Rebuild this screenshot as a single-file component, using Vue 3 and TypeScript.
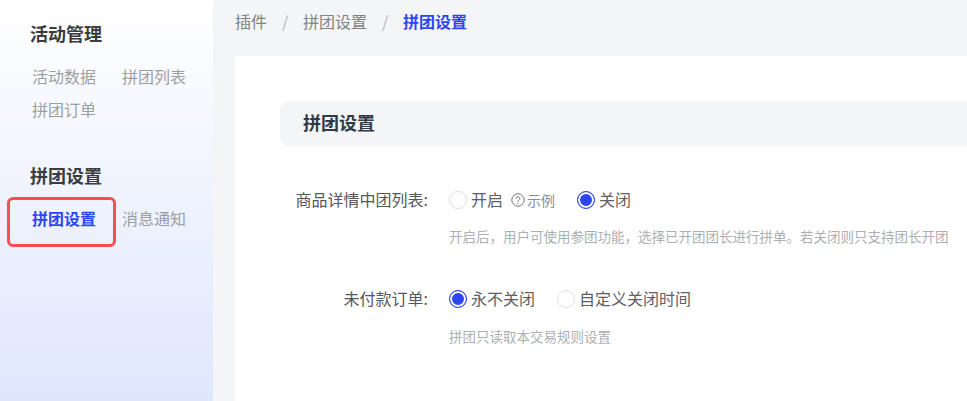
<script setup lang="ts">
interface NavGroup { title: string; items: { label: string; active?: boolean }[] }
const groups: NavGroup[] = [
  { title: '活动管理', items: [{ label: '活动数据' }, { label: '拼团列表' }, { label: '拼团订单' }] },
  { title: '拼团设置', items: [{ label: '拼团设置', active: true }, { label: '消息通知' }] }
]
</script>

<template>
  <div class="page">
    <aside class="side">
      <section v-for="g in groups" :key="g.title" class="group">
        <h3 class="group-title">{{ g.title }}</h3>
        <div class="group-items">
          <span v-for="i in g.items" :key="i.label" class="nav" :class="{ active: i.active }">{{ i.label }}</span>
        </div>
      </section>
      <div class="mark"></div>
    </aside>
    <main class="main">
      <nav class="crumbs">
        <span>插件</span><i>/</i><span>拼团设置</span><i>/</i><b>拼团设置</b>
      </nav>
      <div class="card">
        <div class="head">拼团设置</div>
        <div class="row first">
          <label class="label">商品详情中团列表:</label>
          <div class="field">
            <span class="radio"></span><span class="txt">开启</span>
            <svg class="help" width="14" height="14" viewBox="0 0 14 14" fill="none" stroke="#777" stroke-width="1">
              <circle cx="7" cy="7" r="6.2" />
              <path d="M5.1 5.5a1.9 1.9 0 1 1 2.9 1.6c-.7.4-1 .8-1 1.5" stroke-linecap="round" />
              <path d="M7 10v.9" />
            </svg>
            <span class="eg">示例</span>
            <span class="radio on gap1"></span><span class="txt">关闭</span>
          </div>
        </div>
        <p class="tip">开启后，用户可使用参团功能，选择已开团团长进行拼单。若关闭则只支持团长开团</p>
        <div class="row second">
          <label class="label">未付款订单:</label>
          <div class="field">
            <span class="radio on"></span><span class="txt">永不关闭</span>
            <span class="radio gap2"></span><span class="txt">自定义关闭时间</span>
          </div>
        </div>
        <p class="tip tip2">拼团只读取本交易规则设置</p>
      </div>
    </main>
  </div>
</template>

<style>
html, body { margin: 0; padding: 0; overflow: hidden; }
</style>

<style scoped>
.page {
  display: flex;
  width: 967px;
  height: 401px;
  overflow: hidden;
  background: #f4f5f7;
  font-family: "Noto Sans CJK SC", "Noto Sans", sans-serif;
  font-size: 16px;
}
.side {
  position: relative;
  flex: 0 0 213px;
  box-sizing: border-box;
  padding: 20px 0 0 30px;
  background: linear-gradient(180deg, #ffffff 0%, #dfe7fd 100%);
}
.group { margin-bottom: 42px; }
.group:last-of-type { margin-bottom: 0; }
.group-title {
  margin: 0;
  font-size: 18px;
  line-height: 26px;
  font-weight: 700;
  color: #3a3c40;
}
.group-items {
  display: flex;
  flex-wrap: wrap;
  column-gap: 26px;
  row-gap: 11px;
  width: 160px;
  margin: 19px 0 0 2px;
}
.nav { width: 64px; line-height: 22px; color: #9c9ea2; white-space: nowrap; }
.nav.active { color: #2d46f2; font-weight: 700; }
.mark {
  position: absolute;
  left: 7px;
  top: 197px;
  width: 109px;
  height: 50px;
  box-sizing: border-box;
  border: 3px solid #f5504f;
  border-radius: 6px;
}
.main { flex: 1; min-width: 0; padding: 0 0 0 22px; }
.crumbs {
  display: flex;
  align-items: center;
  height: 56px;
  padding-bottom: 14px;
  box-sizing: border-box;
  color: #808286;
  line-height: 22px;
}
.crumbs i { width: 36px; text-align: center; font-style: normal; color: #b4b6ba; }
.crumbs b { color: #2d46f2; font-weight: 700; }
.card {
  height: 345px;
  padding: 45px 0 0 45px;
  box-sizing: border-box;
  background: #fff;
}
.head {
  height: 45px;
  line-height: 43px;
  padding-left: 23px;
  border-radius: 8px 0 0 8px;
  background: #f4f5f7;
  font-size: 18px;
  font-weight: 700;
  color: #303a46;
}
.row { display: flex; align-items: center; height: 24px; }
.row.first { margin-top: 42px; }
.row.second { margin-top: 41px; }
.label {
  width: 148px;
  flex: none;
  text-align: right;
  color: #55575b;
  white-space: nowrap;
  padding-bottom: 2px;
}
.field { display: flex; align-items: center; margin-left: 21px; }
.radio {
  flex: none;
  box-sizing: border-box;
  width: 18px;
  height: 18px;
  border: 1px solid #dcdee2;
  border-radius: 50%;
  background: #fff;
}
.radio.on {
  border-color: #2d46f2;
  background: #2d46f2;
  box-shadow: inset 0 0 0 2px #fff;
}
.txt { margin-left: 4px; color: #5e6064; white-space: nowrap; line-height: 22px; padding-bottom: 2px; }
.help { margin-left: 8px; flex: none; }
.eg { margin-left: 2px; font-size: 14px; color: #8a8c90; white-space: nowrap; padding-bottom: 1px; }
.gap1 { margin-left: 22px; }
.gap2 { margin-left: 22px; }
.tip {
  margin: 14px 0 0 169px;
  font-size: 13.5px;
  line-height: 20px;
  color: #adafb3;
  white-space: nowrap;
}
.tip2 { margin-top: 15px; }
</style>
